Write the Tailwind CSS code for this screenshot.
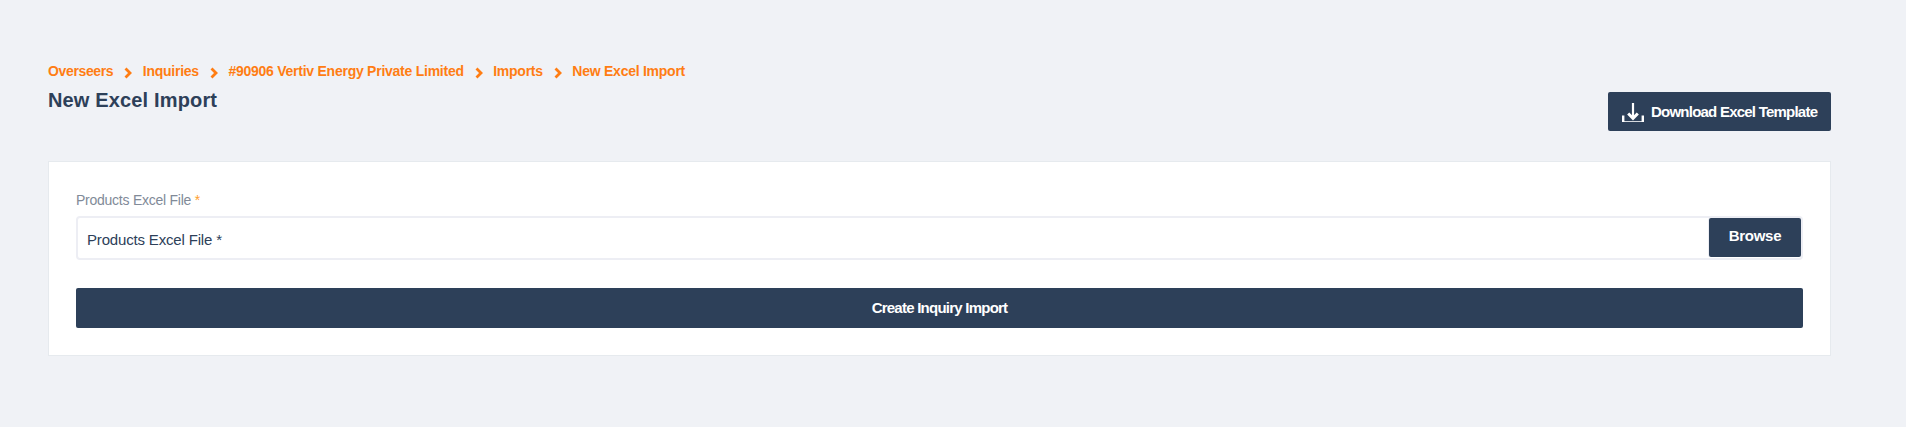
<!DOCTYPE html>
<html lang="en">
<head>
<meta charset="utf-8">
<title>New Excel Import</title>
<script src="https://cdn.jsdelivr.net/npm/@tailwindcss/browser@4"></script>
</head>
<body class="h-[427px] overflow-hidden bg-[#f0f2f6] pl-12 pr-[75px] pt-[61px] font-['Liberation_Sans',Arial,sans-serif] text-[#2d4059]">
<header class="flex h-[100px] items-start justify-between">
  <div>
    <nav class="flex h-5 items-center text-[14px] leading-5 font-bold tracking-[-0.25px] text-[#ff7d13]">
      <a class="tracking-[-0.36px]">Overseers</a>
      <svg class="mt-[3px] ml-[11px] mr-[10.5px] h-3 w-2" viewBox="0 0 8 12" fill="none" stroke="currentColor" stroke-width="2.8"><path d="M1.5 1.5 6 6 1.5 10.5"/></svg>
      <a>Inquiries</a>
      <svg class="mt-[3px] ml-[11px] mr-[10.5px] h-3 w-2" viewBox="0 0 8 12" fill="none" stroke="currentColor" stroke-width="2.8"><path d="M1.5 1.5 6 6 1.5 10.5"/></svg>
      <a>#90906 Vertiv Energy Private Limited</a>
      <svg class="mt-[3px] ml-[11px] mr-[10.5px] h-3 w-2" viewBox="0 0 8 12" fill="none" stroke="currentColor" stroke-width="2.8"><path d="M1.5 1.5 6 6 1.5 10.5"/></svg>
      <a>Imports</a>
      <svg class="mt-[3px] ml-[11px] mr-[10.5px] h-3 w-2" viewBox="0 0 8 12" fill="none" stroke="currentColor" stroke-width="2.8"><path d="M1.5 1.5 6 6 1.5 10.5"/></svg>
      <a>New Excel Import</a>
    </nav>
    <h1 class="mt-1 text-[20px] leading-[30px] font-bold tracking-[0.15px]">New Excel Import</h1>
  </div>
  <a class="mt-[31px] flex h-[39px] w-[223px] items-center rounded-[2px] bg-[#2d4059] pl-[14px] text-[15px] font-bold tracking-[-0.77px] whitespace-nowrap text-white">
    <svg class="mt-[2px] mr-[7px] h-5 w-[22px]" viewBox="0 0 22 20" fill="none" stroke="currentColor"><path d="M11 0V15" stroke-width="2.2"/><path d="M6.2 10.5 11 15.3 15.8 10.5" stroke-width="3"/><path d="M1.2 12.5V19M20.8 12.5V19" stroke-width="2.4"/><path d="M0 18.5H22" stroke-width="1" opacity=".8"/></svg>
    <span class="mt-[2px]">Download Excel Template</span>
  </a>
</header>
<main class="h-[195px] border border-[#e6eaee] bg-white px-[27px] pt-[27px]">
  <label class="block h-[27px] text-[14px] leading-[22px] tracking-[-0.25px] text-[#818a98]">Products Excel File <span class="text-[#ff9f30]">*</span></label>
  <div class="flex h-[44px] justify-between rounded-[4px] border-2 border-[#edeef4]">
    <span class="pl-[9px] text-[15px] leading-[43px] tracking-[-0.17px]">Products Excel File *</span>
    <button class="h-[39px] w-[92px] rounded-[2px] bg-[#2d4059] pb-[3px] text-[15px] font-bold tracking-[-0.3px] text-white shadow-[-1px_0_0_#edeef4]">Browse</button>
  </div>
  <button class="mt-7 block h-10 w-full rounded-[2px] bg-[#2d4059] text-[15px] font-bold tracking-[-0.76px] text-white">Create Inquiry Import</button>
</main>
</body>
</html>
